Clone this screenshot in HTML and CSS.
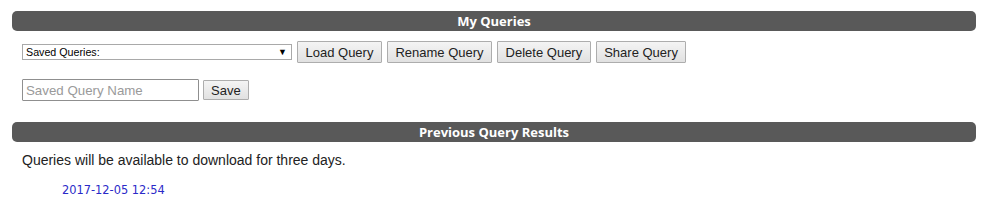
FILE: index.html
```html
<!DOCTYPE html>
<html>
<head>
<meta charset="utf-8">
<link rel="stylesheet" href="styles.css">
</head>
<body>
<div class="page">
  <div class="bar">My Queries</div>
  <div class="controls">
    <div class="select-wrap">
      <select class="select"><option>Saved Queries:</option></select>
      <span class="arrow">▼</span>
    </div>
    <button class="btn">Load Query</button>
    <button class="btn">Rename Query</button>
    <button class="btn">Delete Query</button>
    <button class="btn">Share Query</button>
  </div>
  <div class="save-row">
    <input class="name-input" type="text" placeholder="Saved Query Name">
    <button class="btn save-btn">Save</button>
  </div>
  <div class="bar bar2">Previous Query Results</div>
  <p class="note">Queries will be available to download for three days.</p>
  <a class="result-link" href="#">2017-12-05 12:54</a>
</div>
</body>
</html>
```
FILE: styles.css
```css
html, body {
  margin: 0;
  padding: 0;
  background: #fff;
}
.page {
  padding: 11px 8px 0 12px;
  font-family: "Liberation Sans", Arial, sans-serif;
}
.bar {
  height: 20px;
  line-height: 20px;
  background: #595959;
  border-radius: 5px;
  color: #fff;
  text-align: center;
  font-family: "Open Sans", "DejaVu Sans", sans-serif;
  font-weight: 700;
  font-size: 13px;
}
.controls {
  display: flex;
  align-items: center;
  gap: 5px;
  margin-top: 10px;
  padding-left: 10px;
}
.select-wrap {
  position: relative;
  display: flex;
  width: 270px;
  height: 16px;
}
.select {
  appearance: none;
  -webkit-appearance: none;
  display: block;
  width: 270px;
  height: 16px;
  margin: 0;
  padding: 0 0 0 3px;
  border: 1px solid #a9a9a9;
  border-radius: 0;
  background: #fff;
  font-family: "Liberation Sans", Arial, sans-serif;
  font-size: 10.7px;
  color: #000;
  box-sizing: border-box;
}
.arrow {
  position: absolute;
  right: 5px;
  top: 0;
  line-height: 16px;
  font-size: 9px;
  color: #000;
  pointer-events: none;
}
.btn {
  height: 22px;
  margin: 0;
  padding: 0 7.5px;
  border: 1px solid #adadad;
  border-radius: 1px;
  background: linear-gradient(#f4f4f4, #e1e1e1);
  font-family: "Liberation Sans", Arial, sans-serif;
  font-size: 13px;
  color: #222;
  box-sizing: border-box;
}
.save-row {
  display: flex;
  align-items: center;
  gap: 4px;
  margin-top: 16px;
  padding-left: 10px;
}
.name-input {
  width: 177px;
  height: 22px;
  margin: 0;
  padding: 0 3px;
  border: 1px solid #8f8f8f;
  border-radius: 1px;
  box-sizing: border-box;
  font-family: "Liberation Sans", Arial, sans-serif;
  font-size: 13.3px;
}
.name-input::placeholder {
  color: #9a9a9a;
}
.save-btn {
  height: 20px;
  padding: 0 7px;
}
.bar2 {
  margin-top: 21px;
}
.note {
  margin: 10px 0 0 10px;
  font-size: 14px;
  line-height: 16px;
  color: #222;
}
.result-link {
  display: inline-block;
  margin: 15px 0 0 50px;
  font-family: "DejaVu Sans", Verdana, sans-serif;
  font-size: 11.4px;
  line-height: 14px;
  color: #2a2ac8;
  text-decoration: none;
}
```
